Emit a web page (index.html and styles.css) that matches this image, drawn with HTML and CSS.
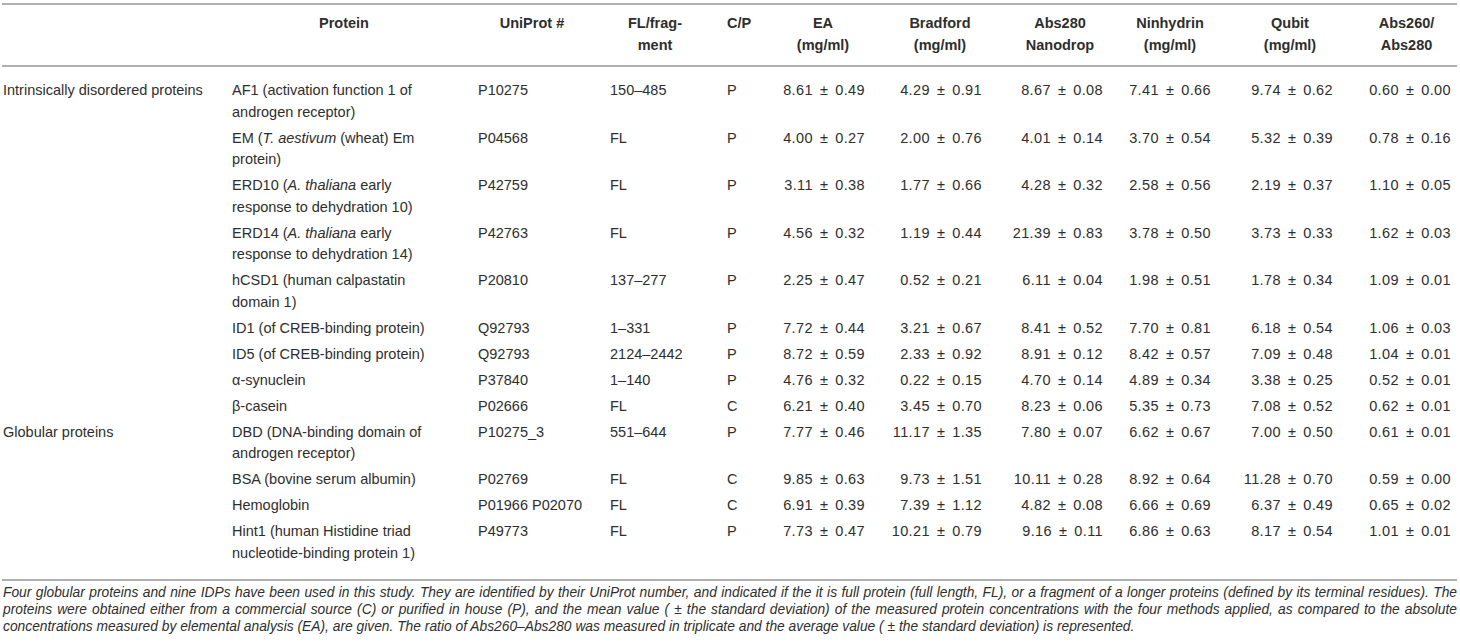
FILE: index.html
```html
<!DOCTYPE html>
<html lang="en">
<head>
<meta charset="utf-8">
<title>Protein concentrations</title>
<link rel="stylesheet" href="styles.css">
</head>
<body>
<div class="page">
<table class="data">
<colgroup>
<col class="w-group"><col class="w-protein"><col class="w-uniprot"><col class="w-frag"><col class="w-cp">
<col class="w-ea"><col class="w-brad"><col class="w-a280"><col class="w-nin"><col class="w-qub"><col class="w-ratio">
</colgroup>
<thead>
<tr>
<th class="group"></th>
<th class="protein">Protein</th>
<th class="uniprot">UniProt #</th>
<th class="frag">FL/frag-<br>ment</th>
<th class="cp">C/P</th>
<th class="num">EA<br>(mg/ml)</th>
<th class="num">Bradford<br>(mg/ml)</th>
<th class="num">Abs280<br>Nanodrop</th>
<th class="num">Ninhydrin<br>(mg/ml)</th>
<th class="num">Qubit<br>(mg/ml)</th>
<th class="num">Abs260/<br>Abs280</th>
</tr>
</thead>
<tbody>
<tr class="first">
<td class="group">Intrinsically disordered proteins</td>
<td class="protein">AF1 (activation function 1 of androgen receptor)</td>
<td class="uniprot">P10275</td><td class="frag">150–485</td><td class="cp">P</td>
<td class="v-ea">8.61 ± 0.49</td><td class="v-brad">4.29 ± 0.91</td><td class="v-a280">8.67 ± 0.08</td><td class="v-nin">7.41 ± 0.66</td><td class="v-qub">9.74 ± 0.62</td><td class="v-ratio">0.60 ± 0.00</td>
</tr>
<tr>
<td class="group"></td>
<td class="protein">EM (<i>T. aestivum</i> (wheat) Em protein)</td>
<td class="uniprot">P04568</td><td class="frag">FL</td><td class="cp">P</td>
<td class="v-ea">4.00 ± 0.27</td><td class="v-brad">2.00 ± 0.76</td><td class="v-a280">4.01 ± 0.14</td><td class="v-nin">3.70 ± 0.54</td><td class="v-qub">5.32 ± 0.39</td><td class="v-ratio">0.78 ± 0.16</td>
</tr>
<tr>
<td class="group"></td>
<td class="protein">ERD10 (<i>A. thaliana</i> early response to dehydration 10)</td>
<td class="uniprot">P42759</td><td class="frag">FL</td><td class="cp">P</td>
<td class="v-ea">3.11 ± 0.38</td><td class="v-brad">1.77 ± 0.66</td><td class="v-a280">4.28 ± 0.32</td><td class="v-nin">2.58 ± 0.56</td><td class="v-qub">2.19 ± 0.37</td><td class="v-ratio">1.10 ± 0.05</td>
</tr>
<tr>
<td class="group"></td>
<td class="protein">ERD14 (<i>A. thaliana</i> early response to dehydration 14)</td>
<td class="uniprot">P42763</td><td class="frag">FL</td><td class="cp">P</td>
<td class="v-ea">4.56 ± 0.32</td><td class="v-brad">1.19 ± 0.44</td><td class="v-a280">21.39 ± 0.83</td><td class="v-nin">3.78 ± 0.50</td><td class="v-qub">3.73 ± 0.33</td><td class="v-ratio">1.62 ± 0.03</td>
</tr>
<tr>
<td class="group"></td>
<td class="protein">hCSD1 (human calpastatin domain 1)</td>
<td class="uniprot">P20810</td><td class="frag">137–277</td><td class="cp">P</td>
<td class="v-ea">2.25 ± 0.47</td><td class="v-brad">0.52 ± 0.21</td><td class="v-a280">6.11 ± 0.04</td><td class="v-nin">1.98 ± 0.51</td><td class="v-qub">1.78 ± 0.34</td><td class="v-ratio">1.09 ± 0.01</td>
</tr>
<tr>
<td class="group"></td>
<td class="protein">ID1 (of CREB-binding protein)</td>
<td class="uniprot">Q92793</td><td class="frag">1–331</td><td class="cp">P</td>
<td class="v-ea">7.72 ± 0.44</td><td class="v-brad">3.21 ± 0.67</td><td class="v-a280">8.41 ± 0.52</td><td class="v-nin">7.70 ± 0.81</td><td class="v-qub">6.18 ± 0.54</td><td class="v-ratio">1.06 ± 0.03</td>
</tr>
<tr>
<td class="group"></td>
<td class="protein">ID5 (of CREB-binding protein)</td>
<td class="uniprot">Q92793</td><td class="frag">2124–2442</td><td class="cp">P</td>
<td class="v-ea">8.72 ± 0.59</td><td class="v-brad">2.33 ± 0.92</td><td class="v-a280">8.91 ± 0.12</td><td class="v-nin">8.42 ± 0.57</td><td class="v-qub">7.09 ± 0.48</td><td class="v-ratio">1.04 ± 0.01</td>
</tr>
<tr>
<td class="group"></td>
<td class="protein">α-synuclein</td>
<td class="uniprot">P37840</td><td class="frag">1–140</td><td class="cp">P</td>
<td class="v-ea">4.76 ± 0.32</td><td class="v-brad">0.22 ± 0.15</td><td class="v-a280">4.70 ± 0.14</td><td class="v-nin">4.89 ± 0.34</td><td class="v-qub">3.38 ± 0.25</td><td class="v-ratio">0.52 ± 0.01</td>
</tr>
<tr>
<td class="group"></td>
<td class="protein">β-casein</td>
<td class="uniprot">P02666</td><td class="frag">FL</td><td class="cp">C</td>
<td class="v-ea">6.21 ± 0.40</td><td class="v-brad">3.45 ± 0.70</td><td class="v-a280">8.23 ± 0.06</td><td class="v-nin">5.35 ± 0.73</td><td class="v-qub">7.08 ± 0.52</td><td class="v-ratio">0.62 ± 0.01</td>
</tr>
<tr>
<td class="group">Globular proteins</td>
<td class="protein">DBD (DNA-binding domain of androgen receptor)</td>
<td class="uniprot">P10275_3</td><td class="frag">551–644</td><td class="cp">P</td>
<td class="v-ea">7.77 ± 0.46</td><td class="v-brad">11.17 ± 1.35</td><td class="v-a280">7.80 ± 0.07</td><td class="v-nin">6.62 ± 0.67</td><td class="v-qub">7.00 ± 0.50</td><td class="v-ratio">0.61 ± 0.01</td>
</tr>
<tr>
<td class="group"></td>
<td class="protein">BSA (bovine serum albumin)</td>
<td class="uniprot">P02769</td><td class="frag">FL</td><td class="cp">C</td>
<td class="v-ea">9.85 ± 0.63</td><td class="v-brad">9.73 ± 1.51</td><td class="v-a280">10.11 ± 0.28</td><td class="v-nin">8.92 ± 0.64</td><td class="v-qub">11.28 ± 0.70</td><td class="v-ratio">0.59 ± 0.00</td>
</tr>
<tr>
<td class="group"></td>
<td class="protein">Hemoglobin</td>
<td class="uniprot">P01966 P02070</td><td class="frag">FL</td><td class="cp">C</td>
<td class="v-ea">6.91 ± 0.39</td><td class="v-brad">7.39 ± 1.12</td><td class="v-a280">4.82 ± 0.08</td><td class="v-nin">6.66 ± 0.69</td><td class="v-qub">6.37 ± 0.49</td><td class="v-ratio">0.65 ± 0.02</td>
</tr>
<tr class="last">
<td class="group"></td>
<td class="protein">Hint1 (human Histidine triad nucleotide-binding protein 1)</td>
<td class="uniprot">P49773</td><td class="frag">FL</td><td class="cp">P</td>
<td class="v-ea">7.73 ± 0.47</td><td class="v-brad">10.21 ± 0.79</td><td class="v-a280">9.16 ± 0.11</td><td class="v-nin">6.86 ± 0.63</td><td class="v-qub">8.17 ± 0.54</td><td class="v-ratio">1.01 ± 0.01</td>
</tr>
</tbody>
</table>
<div class="note">
<span class="note-line">Four globular proteins and nine IDPs have been used in this study. They are identified by their UniProt number, and indicated if the it is full protein (full length, FL), or a fragment of a longer proteins (defined by its terminal residues). The</span>
<span class="note-line">proteins were obtained either from a commercial source (C) or purified in house (P), and the mean value ( ± the standard deviation) of the measured protein concentrations with the four methods applied, as compared to the absolute</span>
<span class="note-line last-line">concentrations measured by elemental analysis (EA), are given. The ratio of Abs260–Abs280 was measured in triplicate and the average value ( ± the standard deviation) is represented.</span>
</div>
</div>
</body>
</html>
```
FILE: styles.css
```css
html, body {
  margin: 0;
  padding: 0;
  background: #ffffff;
}

.page {
  width: 1455px;
  padding: 3px 3px 0 2px;
  font-family: "Liberation Sans", Arial, sans-serif;
  color: #2e2e2e;
}

.data {
  width: 1455px;
  table-layout: fixed;
  border-collapse: collapse;
  border-top: 2px solid #b0b0b0;
  border-bottom: 2px solid #b0b0b0;
  font-size: 14.5px;
  line-height: 21.5px;
}

.w-group { width: 230px; }
.w-protein { width: 246px; }
.w-uniprot { width: 132px; }
.w-frag { width: 117px; }
.w-cp { width: 43px; }
.w-ea { width: 106px; }
.w-brad { width: 128px; }
.w-a280 { width: 112px; }
.w-nin { width: 108px; }
.w-qub { width: 132px; }
.w-ratio { width: 101px; }

.data thead tr {
  border-bottom: 2px solid #b0b0b0;
}

.data th {
  font-weight: bold;
  text-align: center;
  vertical-align: top;
  padding: 8px 0 9px 0;
}

.data td {
  vertical-align: top;
  text-align: left;
  padding: 2.25px 0;
  white-space: normal;
}

.data tr.first td { padding-top: 13px; }
.data tr.last td { padding-bottom: 15px; }

.data .group { padding-left: 1px; }
.data th.protein { padding-right: 22px; }
.data td.protein { padding-right: 32px; }
.data .uniprot { padding-right: 24px; }
.data .frag { padding-right: 27px; }
.data .cp { padding-right: 12px; }

.data th.cp { text-align: left; }

.data td[class^="v-"] {
  text-align: right;
  white-space: nowrap;
  word-spacing: 2.5px;
  letter-spacing: 0.4px;
}
.data td.v-ea { padding-right: 11px; }
.data td.v-brad { padding-right: 22px; }
.data td.v-a280 { padding-right: 13px; }
.data td.v-nin { padding-right: 13px; }
.data td.v-qub { padding-right: 23px; }
.data td.v-ratio { padding-right: 6px; }

.note {
  margin-top: 3px;
  padding-left: 1px;
  font-size: 13.8px;
  line-height: 17px;
  font-style: italic;
}

.note-line {
  display: block;
  text-align: justify;
  text-align-last: justify;
}

.note-line.last-line {
  text-align-last: left;
}
```
